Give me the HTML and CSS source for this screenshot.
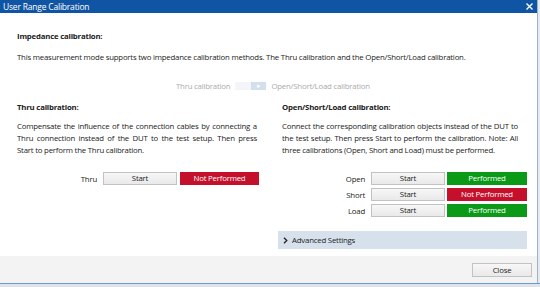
FILE: index.html
```html
<!DOCTYPE html>
<html lang="en">
<head>
    <meta charset="UTF-8">
    <title>User Range Calibration</title>
    <link rel="stylesheet" href="styles.css">
</head>
<body>
<div class="dialog">
    <div class="titlebar">
        <span class="title">User Range Calibration</span>
        <svg class="close" width="7" height="7" viewBox="0 0 7 7"><path d="M0.5 0.5L6.5 6.5M6.5 0.5L0.5 6.5" stroke="#fff" stroke-width="1.4"/></svg>
    </div>
    <div class="content">
        <h2 class="head">Impedance calibration:</h2>
        <p class="desc">This measurement mode supports two impedance calibration methods. The Thru calibration and the Open/Short/Load calibration.</p>
        <div class="mode">
            <span>Thru calibration</span>
            <div class="toggle"><div class="tLeft"></div><div class="tRight">&#9656;</div></div>
            <span>Open/Short/Load calibration</span>
        </div>
        <div class="cols">
            <div class="col left">
                <h2 class="head">Thru calibration:</h2>
                <p class="text">Compensate the influence of the connection cables by connecting a Thru connection instead of the DUT to the test setup. Then press Start to perform the Thru calibration.</p>
                <div class="rows">
                    <div class="row"><span class="lbl">Thru</span><div class="btn">Start</div><div class="state bad">Not Performed</div></div>
                </div>
            </div>
            <div class="col right">
                <h2 class="head">Open/Short/Load calibration:</h2>
                <p class="text">Connect the corresponding calibration objects instead of the DUT to the test setup. Then press Start to perform the calibration. Note: All three calibrations (Open, Short and Load) must be performed.</p>
                <div class="rows">
                    <div class="row"><span class="lbl">Open</span><div class="btn">Start</div><div class="state ok">Performed</div></div>
                    <div class="row"><span class="lbl">Short</span><div class="btn">Start</div><div class="state bad">Not Performed</div></div>
                    <div class="row"><span class="lbl">Load</span><div class="btn">Start</div><div class="state ok">Performed</div></div>
                </div>
                <div class="adv">
                    <svg width="5" height="7" viewBox="0 0 5 7"><path d="M1 0.8L3.8 3.5L1 6.2" fill="none" stroke="#222" stroke-width="1.3"/></svg>
                    <span>Advanced Settings</span>
                </div>
            </div>
        </div>
    </div>
    <div class="footer">
        <div class="btn closeBtn">Close</div>
    </div>
</div>
<div class="taskbar"></div>
</body>
</html>
```

FILE: styles.css
```css
*{
    margin: 0;
    padding: 0;
    box-sizing: border-box;
}
body{
    width: 540px;
    height: 287px;
    overflow: hidden;
    background: #e6e9ed;
    font-family: "Segoe UI", "Open Sans", sans-serif;
    font-size: 7.8px;
    letter-spacing: -0.2px;
    color: #222;
}
.dialog{
    width: 538px;
    height: 283px;
    background: #fff;
    border-right: 1px solid #9fb3c8;
    display: flex;
    flex-direction: column;
}
.titlebar{
    height: 13px;
    background: #1055a3;
    color: #fff;
    display: flex;
    align-items: center;
    justify-content: space-between;
    padding: 0 4px 0 3px;
    font-size: 8.5px;
}
.content{
    flex: 1;
    padding: 17px 10px 0 17px;
}
.head{
    font-size: 7.8px;
    font-weight: bold;
    line-height: 12px;
}
.desc{
    line-height: 12px;
    margin-top: 9px;
}
.mode{
    display: flex;
    align-items: center;
    height: 10px;
    margin-top: 18px;
    padding-left: 159px;
    color: #aaa;
    gap: 5px;
}
.toggle{
    display: flex;
    width: 31px;
    height: 8px;
}
.tLeft{
    flex: 1;
    background: #f3f5f8;
}
.tRight{
    flex: 1;
    background: #d3dfec;
    color: #fff;
    font-size: 7px;
    line-height: 8px;
    text-align: center;
}
.cols{
    display: grid;
    grid-template-columns: 242px 249px;
    column-gap: 19px;
    margin-top: 10px;
}
.left .text{
    padding-right: 2px;
}
.right{
    padding-left: 4px;
}
.right .head, .right .text{
    padding-right: 9px;
}
.text{
    line-height: 12px;
    margin-top: 7px;
    text-align: justify;
}
.rows{
    display: flex;
    flex-direction: column;
    gap: 3px;
    margin-top: 16px;
}
.row{
    display: flex;
    justify-content: flex-end;
    align-items: center;
    height: 13px;
}
.lbl{
    margin-right: 6px;
}
.btn{
    width: 74px;
    height: 13px;
    line-height: 11px;
    text-align: center;
    border: 1px solid #c2c2c2;
    background: linear-gradient(#f7f7f7, #e9e9e9);
}
.state{
    width: 80px;
    height: 13px;
    line-height: 13px;
    text-align: center;
    color: #fff;
    margin-left: 2px;
}
.left .state{
    margin-left: 3px;
    width: 79px;
}
.bad{
    background: #c4102b;
}
.ok{
    background: #0b9a17;
}
.adv{
    display: flex;
    align-items: center;
    gap: 4px;
    height: 18px;
    margin-top: 14px;
    margin-left: -4px;
    padding-left: 5px;
    background: #d6e1ec;
}
.footer{
    height: 27px;
    background: #f3f3f3;
    display: flex;
    justify-content: flex-end;
    align-items: center;
    padding-right: 5px;
}
.closeBtn{
    width: 60px;
    height: 14px;
    line-height: 12px;
}
.taskbar{
    height: 4px;
    border-top: 1px solid #6b9bd3;
    background: #dfe4ea;
}
```
